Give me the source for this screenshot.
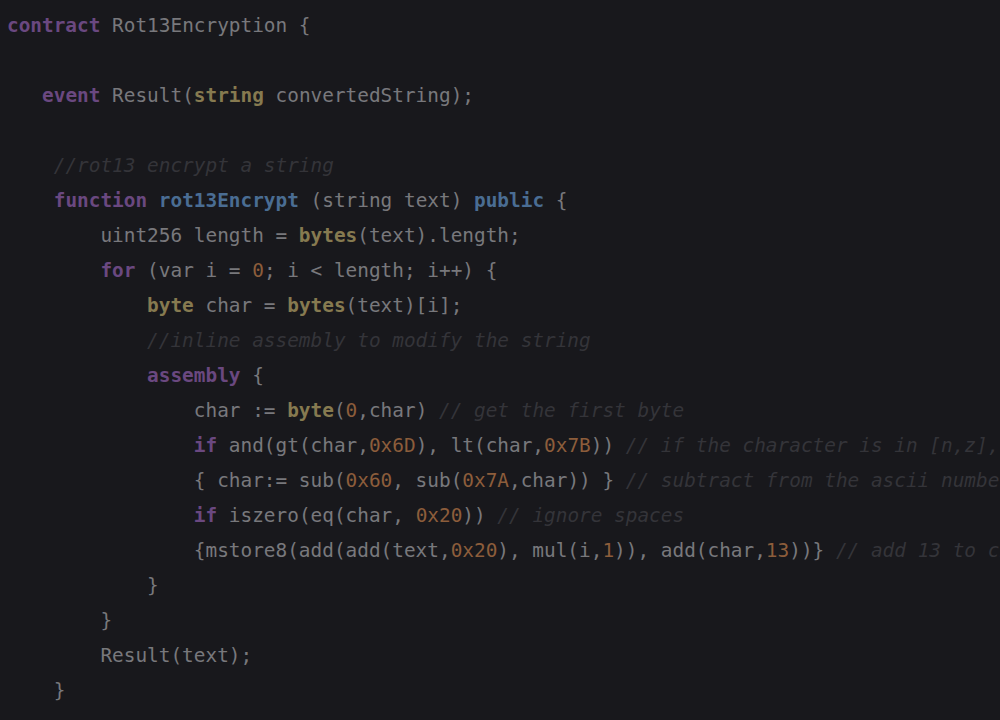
import React from "react";

type Tok = [string, string?];

const K = "text-[#6a4880] font-bold";
const F = "text-[#4a6d93] font-bold";
const T = "text-[#867a50] font-bold";
const N = "text-[#8c5d3b]";
const C = "text-[#343439] italic";

const lines: Tok[][] = [
  [["contract", K], [" Rot13Encryption {"]],
  [],
  [["   "], ["event", K], [" Result("], ["string", T], [" convertedString);"]],
  [],
  [["    "], ["//rot13 encrypt a string", C]],
  [["    "], ["function", K], [" "], ["rot13Encrypt", F], [" (string text) "], ["public", F], [" {"]],
  [["        uint256 length = "], ["bytes", T], ["(text).length;"]],
  [["        "], ["for", K], [" (var i = "], ["0", N], ["; i < length; i++) {"]],
  [["            "], ["byte", T], [" char = "], ["bytes", T], ["(text)[i];"]],
  [["            "], ["//inline assembly to modify the string", C]],
  [["            "], ["assembly", K], [" {"]],
  [["                char := "], ["byte", T], ["("], ["0", N], [",char) "], ["// get the first byte", C]],
  [["                "], ["if", K], [" and(gt(char,"], ["0x6D", N], ["), lt(char,"], ["0x7B", N], [")) "], ["// if the character is in [n,z], subtract", C]],
  [["                { char:= sub("], ["0x60", N], [", sub("], ["0x7A", N], [",char)) } "], ["// subtract from the ascii number", C]],
  [["                "], ["if", K], [" iszero(eq(char, "], ["0x20", N], [")) "], ["// ignore spaces", C]],
  [["                {mstore8(add(add(text,"], ["0x20", N], ["), mul(i,"], ["1", N], [")), add(char,"], ["13", N], ["))} "], ["// add 13 to char", C]],
  [["            }"]],
  [["        }"]],
  [["        Result(text);"]],
  [["    }"]],
];

export default function App() {
  return (
    <div className="w-[1000px] h-[720px] overflow-hidden bg-[#18181c] pt-[7.5px] pl-[7px]">
      <div
        className="text-[19.4px] leading-[35px] text-[#78787c] whitespace-pre"
        style={{ fontFamily: '"DejaVu Sans Mono", "Liberation Mono", monospace' }}
      >
        {lines.map((l, i) => (
          <div key={i} className="h-[35px]">
            {l.map(([t, c], j) => (
              <span key={j} className={c}>
                {t}
              </span>
            ))}
          </div>
        ))}
      </div>
    </div>
  );
}
